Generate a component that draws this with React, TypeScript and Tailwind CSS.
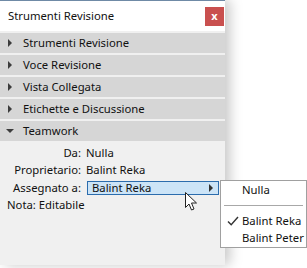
import React from 'react'

const sections = ['Strumenti Revisione', 'Voce Revisione', 'Vista Collegata', 'Etichette e Discussione']

function SectionHeader({ title, open }: { title: string; open?: boolean }) {
  return (
    <div className="h-[20px] mb-[2px] bg-[#d6d6d6] flex items-center">
      <div className="w-[23px] flex items-center justify-center pr-[3px]">
        {open ? (
          <span className="w-0 h-0 border-l-[4px] border-r-[4px] border-t-[4px] border-l-transparent border-r-transparent border-t-[#3c3c3c]" />
        ) : (
          <span className="w-0 h-0 border-t-[4px] border-b-[4px] border-l-[4px] border-t-transparent border-b-transparent border-l-[#3c3c3c]" />
        )}
      </div>
      <span>{title}</span>
    </div>
  )
}

function Row({ label, children }: { label: string; children: React.ReactNode }) {
  return (
    <div className="flex items-center h-[17px]">
      <div className="w-[81px] text-right">{label}</div>
      <div className="pl-[5px] flex-1">{children}</div>
    </div>
  )
}

export default function App() {
  return (
    <div
      className="relative w-[307px] h-[268px] bg-white text-[11.3px] text-[#111] overflow-hidden whitespace-nowrap"
      style={{ fontFamily: '"Noto Sans", "Open Sans", sans-serif' }}
    >
      {/* Panel */}
      <div className="w-[225px] h-[265px] bg-[#f0f0f0] border-t border-[#6f8aa6] shadow-[5px_0_12px_rgba(0,0,0,0.22)] flex flex-col">
        <div className="h-[30px] bg-white flex items-center justify-between pl-[8px] pr-[1px]">
          <span>Strumenti Revisione</span>
          <div className="w-[19px] h-[19px] bg-[#c9504f] text-white font-bold text-[11px] flex items-center justify-center leading-none pb-[2px]">
            x
          </div>
        </div>
        <div className="pt-[2px]">
          {sections.map((s) => (
            <SectionHeader key={s} title={s} />
          ))}
          <SectionHeader title="Teamwork" open />
        </div>

        <div className="pt-[2px]">
          <Row label="Da:">Nulla</Row>
          <Row label="Proprietario:">Balint Reka</Row>
          <div className="flex items-center h-[18px]">
            <div className="w-[81px] text-right">Assegnato a:</div>
            <div className="ml-[6px] w-[132px] h-[14px] border border-[#2b6cad] bg-[#cce4f7] flex items-center justify-between pl-[4px] pr-[5px]">
              <span className="leading-none">Balint Reka</span>
              <span className="w-0 h-0 border-t-[4px] border-b-[4px] border-l-[4px] border-t-transparent border-b-transparent border-l-[#333]" />
            </div>
          </div>
          <div className="h-[17px] pl-[7px] flex items-center">Nota: Editabile</div>
        </div>
      </div>

      {/* Popup menu */}
      <div className="absolute left-[220px] top-[180px] w-[87px] h-[68px] bg-white border border-[#a0a0a0]">
        <div className="h-[19px] pl-[21px] flex items-center">Nulla</div>
        <div className="mx-[3px] mt-[5px] mb-[6px] h-px bg-[#a8a8a8]" />
        <div className="h-[18px] flex items-center">
          <svg className="ml-[6px] mr-[3px] shrink-0" width="12" height="12" viewBox="0 0 12 12">
            <path d="M1 6.5 L4.2 9.8 L11 2" fill="none" stroke="#333" strokeWidth="1.4" />
          </svg>
          <span>Balint Reka</span>
        </div>
        <div className="h-[17px] pl-[21px] flex items-center">Balint Peter</div>
      </div>

      {/* Cursor */}
      <svg className="absolute left-[185px] top-[192px]" width="13" height="20" viewBox="0 0 13 20">
        <path
          d="M0.5 0.5 L0.5 15.5 L4 12 L6.5 18 L9 17 L6.5 11 L11.5 11 Z"
          fill="white"
          stroke="#222"
          strokeWidth="1"
          strokeLinejoin="round"
        />
      </svg>
    </div>
  )
}
